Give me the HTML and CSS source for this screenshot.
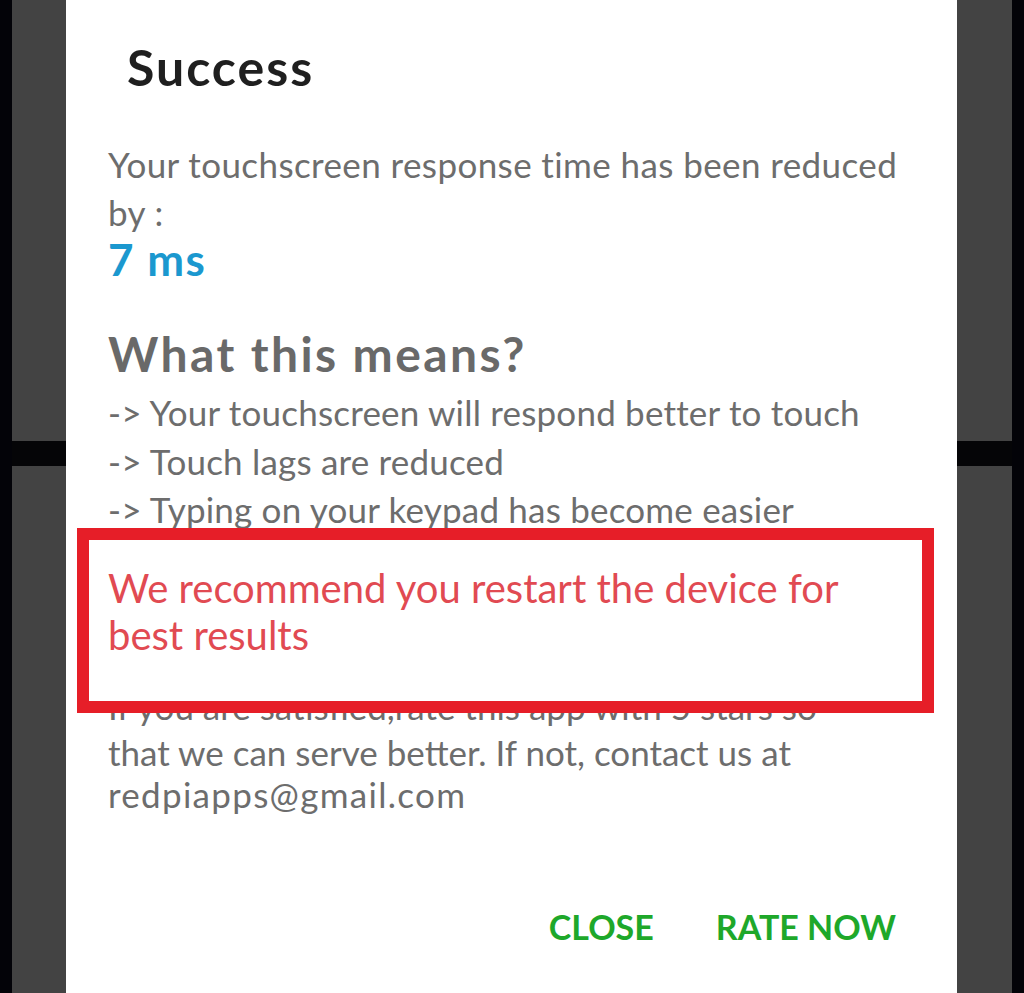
FILE: index.html
```html
<!DOCTYPE html>
<html>
<head>
<meta charset="utf-8">
<link rel="stylesheet" href="styles.css">
</head>
<body>
<div class="screen">
  <div class="edge"></div>
  <div class="side"></div>
  <div class="dialog">
    <h1 class="title">Success</h1>
    <p class="text intro">Your touchscreen response time has been reduced<br>by :</p>
    <p class="value">7 ms</p>
    <h2 class="heading">What this means?</h2>
    <p class="text list">-&gt; Your touchscreen will respond better to touch<br>-&gt; Touch lags are reduced<br>-&gt; Typing on your keypad has become easier</p>
    <div class="callout">
      <p class="text warn">We recommend you restart the device for<br>best results</p>
    </div>
    <p class="text note"><span class="first-line">If you are satisfied,rate this app with 5 stars so</span>that we can serve better. If not, contact us at<br><span class="email">redpiapps@gmail.com</span></p>
    <div class="actions">
      <span class="btn">CLOSE</span>
      <span class="btn">RATE NOW</span>
    </div>
  </div>
  <div class="side"></div>
  <div class="edge"></div>
</div>
</body>
</html>
```
FILE: styles.css
```css
html, body {
  margin: 0;
  padding: 0;
  background: #000;
}
.screen {
  display: flex;
  width: 1024px;
  height: 993px;
  overflow: hidden;
}
.edge {
  width: 12px;
  background: #030308;
}
.side {
  width: 54px;
  flex: none;
  background: linear-gradient(to bottom, #434343 0, #434343 441px, #050507 441px, #050507 466px, #434343 466px, #434343 100%);
}
.side:nth-of-type(4) {
  width: 55px;
}
.dialog {
  width: 891px;
  flex: none;
  background: #fff;
  box-sizing: border-box;
  padding: 38px 42px 0 42px;
  font-family: Lato, "Open Sans", sans-serif;
  position: relative;
}
.title {
  margin: 0 0 0 19px;
  font-size: 50px;
  line-height: 58px;
  letter-spacing: 2px;
  font-weight: 700;
  color: #1f1f1f;
}
.text {
  margin: 0;
  font-size: 35px;
  line-height: 48px;
  color: #6d6d6d;
  white-space: nowrap;
}
.intro {
  margin-top: 44px;
  letter-spacing: 0.4px;
}
.value {
  margin: 0;
  font-size: 44px;
  line-height: 46px;
  letter-spacing: 1.5px;
  font-weight: 700;
  color: #1b98cf;
}
.heading {
  margin: 47px 0 0 0;
  font-size: 48px;
  line-height: 50px;
  letter-spacing: 2.4px;
  font-weight: 700;
  color: #696969;
}
.list {
  margin-top: 9px;
  line-height: 48.5px;
  letter-spacing: 0.2px;
}
.callout {
  position: relative;
  z-index: 1;
  margin: -6px -19px 0 -31px;
  border: 12px solid #e61e28;
  background: #fff;
  padding: 25px 7px 42px 19px;
}
.warn {
  font-size: 40px;
  color: #e14a52;
  line-height: 47px;
}
.note {
  margin-top: -31.5px;
  line-height: 42px;
}
.first-line {
  display: block;
  line-height: 50px;
}
.email {
  letter-spacing: 1.3px;
}
.actions {
  display: flex;
  justify-content: flex-end;
  gap: 62px;
  margin-top: 92px;
  padding-right: 19px;
}
.btn {
  font-size: 34px;
  line-height: 40px;
  font-weight: 700;
  color: #1ea82a;
}
```
